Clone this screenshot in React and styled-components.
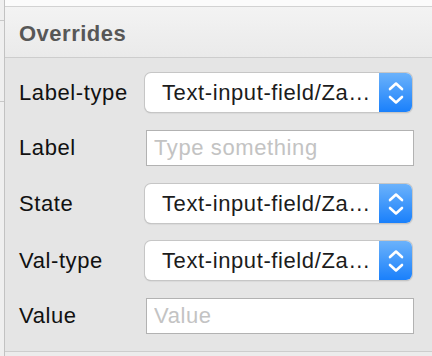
import styled, { createGlobalStyle } from 'styled-components';

const Global = createGlobalStyle`
  html, body {
    margin: 0;
    padding: 0;
    background: #e5e5e5;
  }
  body {
    font-family: "Liberation Sans", Arial, sans-serif;
  }
`;

const rows = [
  { label: 'Label-type', kind: 'select', value: 'Text-input-field/Zahlenwert' },
  { label: 'Label', kind: 'input', placeholder: 'Type something' },
  { label: 'State', kind: 'select', value: 'Text-input-field/Zahlenwert' },
  { label: 'Val-type', kind: 'select', value: 'Text-input-field/Zahlenwert' },
  { label: 'Value', kind: 'input', placeholder: 'Value' },
];

function Chevrons() {
  return (
    <svg width="18" height="26" viewBox="0 0 18 26" fill="none">
      <path d="M3 9 L9 3.5 L15 9" stroke="#fff" strokeWidth="2.6" strokeLinecap="round" strokeLinejoin="round" />
      <path d="M3 17 L9 22.5 L15 17" stroke="#fff" strokeWidth="2.6" strokeLinecap="round" strokeLinejoin="round" />
    </svg>
  );
}

export default function App() {
  return (
    <>
      <Global />
      <Page>
        <SideStrip>
          <StripCell $h={20} />
          <StripCell $h={80} />
          <StripFill />
        </SideStrip>
        <Panel>
          <TopGap />
          <Header>Overrides</Header>
          <Body>
            {rows.map((r) => (
              <Row key={r.label}>
                <Label>{r.label}</Label>
                {r.kind === 'select' ? (
                  <Select>
                    <SelectText>{r.value}</SelectText>
                    <Stepper>
                      <Chevrons />
                    </Stepper>
                  </Select>
                ) : (
                  <Field placeholder={r.placeholder} />
                )}
              </Row>
            ))}
          </Body>
          <Footer />
        </Panel>
      </Page>
    </>
  );
}

const Page = styled.div`
  width: 432px;
  height: 356px;
  display: flex;
  overflow: hidden;
`;

const SideStrip = styled.div`
  width: 5px;
  display: flex;
  flex-direction: column;
  background: #efefef;
  border-right: 1px solid #c2c2c2;
`;

const StripCell = styled.div`
  height: ${(p) => p.$h}px;
  border-bottom: 1px solid #c8c8c8;
`;

const StripFill = styled.div`
  flex: 1;
`;

const Panel = styled.div`
  flex: 1;
  display: flex;
  flex-direction: column;
`;

const TopGap = styled.div`
  height: 6px;
  background: #fbfbfb;
  border-bottom: 1px solid #d2d2d2;
`;

const Header = styled.div`
  height: 51px;
  box-sizing: border-box;
  padding: 3px 0 0 14px;
  display: flex;
  align-items: center;
  background: linear-gradient(#f3f3f3, #eaeaea);
  border-bottom: 1px solid #cdcdcd;
  font-size: 22px;
  font-weight: bold;
  color: #575757;
  letter-spacing: 0.5px;
`;

const Body = styled.div`
  padding: 15px 18px 0 14px;
  height: 294px;
  box-sizing: border-box;
  display: flex;
  flex-direction: column;
  gap: 18px;
  background: #e5e5e5;
  border-bottom: 1px solid #cdcdcd;
`;

const Footer = styled.div`
  flex: 1;
  background: #ececec;
`;

const Row = styled.div`
  display: flex;
  align-items: center;
`;

const Label = styled.div`
  width: 126px;
  flex-shrink: 0;
  font-size: 22px;
  color: #111;
  letter-spacing: 0.6px;
`;

const Select = styled.div`
  width: 267px;
  height: 39px;
  box-sizing: border-box;
  display: flex;
  background: #fff;
  border-radius: 6px;
  box-shadow: 0 0 0 1px #c6c6c6, 0 1px 1.5px rgba(0, 0, 0, 0.25);
  overflow: hidden;
`;

const SelectText = styled.div`
  flex: 1;
  min-width: 0;
  padding-left: 17px;
  line-height: 39px;
  font-size: 22px;
  color: #1c1c1c;
  letter-spacing: 0.6px;
  white-space: nowrap;
  overflow: hidden;
  text-overflow: ellipsis;
`;

const Stepper = styled.div`
  width: 33px;
  flex-shrink: 0;
  display: flex;
  align-items: center;
  justify-content: center;
  background: linear-gradient(#6bb2fb, #1a80fb);
`;

const Field = styled.input`
  width: 268px;
  height: 36px;
  box-sizing: border-box;
  margin-left: 1px;
  border: 1px solid #b2b2b2;
  border-radius: 0;
  background: #fff;
  padding: 0 7px;
  font-family: "Liberation Sans", Arial, sans-serif;
  font-size: 22px;
  letter-spacing: 0.6px;
  outline: none;
  &::placeholder {
    color: #c3c3c3;
  }
`;
